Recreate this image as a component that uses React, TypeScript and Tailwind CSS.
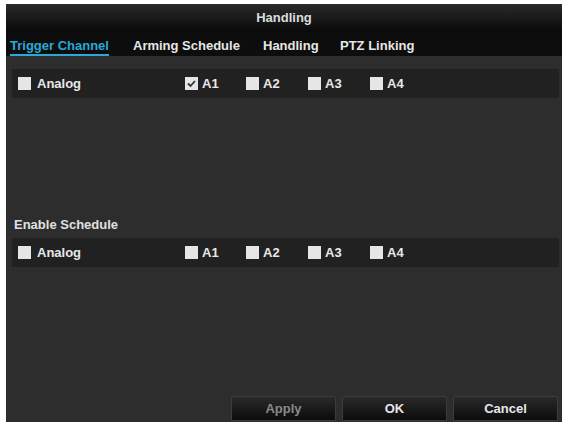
import React from "react";

function Box({ checked }: { checked?: boolean }) {
  return (
    <span className="inline-flex h-[13px] w-[13px] items-center justify-center bg-[#e6e6e6]">
      {checked && (
        <svg width="11" height="11" viewBox="0 0 11 11">
          <path d="M2 5.5 L4.5 8 L9 3" stroke="#333" strokeWidth="1.8" fill="none" />
        </svg>
      )}
    </span>
  );
}

function Row({ a1 }: { a1?: boolean }) {
  const items = [
    { l: "A1", c: a1, w: "w-[61px]" },
    { l: "A2", c: false, w: "w-[62px]" },
    { l: "A3", c: false, w: "w-[62px]" },
    { l: "A4", c: false, w: "w-[62px]" },
  ];
  return (
    <div className="flex h-[29px] items-center bg-[#212121] pl-[6px] text-[13px] font-bold text-[#e8e8e8]">
      <div className="flex w-[167px] items-center gap-[6px]">
        <Box />
        <span>Analog</span>
      </div>
      {items.map((it) => (
        <div key={it.l} className={`flex ${it.w} items-center gap-[4px]`}>
          <Box checked={it.c} />
          <span>{it.l}</span>
        </div>
      ))}
    </div>
  );
}

function Btn({ label, dim }: { label: string; dim?: boolean }) {
  return (
    <div
      className={`flex h-[25px] w-[105px] items-center justify-center rounded-t-[2px] border border-[#3c3c3c] bg-gradient-to-b from-[#2a2a2a] to-[#0c0c0c] text-[13px] font-bold ${
        dim ? "text-[#8a8a8a]" : "text-[#e6e6e6]"
      }`}
    >
      {label}
    </div>
  );
}

export default function App() {
  return (
    <div
      className="h-[426px] w-[568px] bg-white pl-[6px] pt-[4px]"
      style={{ fontFamily: '"Liberation Sans", Arial, sans-serif' }}
    >
      <div className="flex h-[418px] w-[556px] flex-col bg-[#2d2d2d]">
        <div className="flex h-[28px] items-center justify-center bg-gradient-to-b from-[#2a2a2a] to-[#0a0a0a] text-[13px] font-bold text-[#dcdcdc]">
          Handling
        </div>
        <div className="flex h-[24px] items-start bg-[#0d0d0d] pl-[4px] pt-[4px] text-[13px] font-bold text-[#e6e6e6]">
          <div className="w-[123px]">
            <span className="border-b-2 border-[#2aa8d8] pb-[1px] text-[#2aa8d8]">Trigger Channel</span>
          </div>
          <div className="w-[130px]">Arming Schedule</div>
          <div className="w-[77px]">Handling</div>
          <div>PTZ Linking</div>
        </div>
        <div className="flex flex-1 flex-col pl-[6px] pr-[3px] pt-[13px]">
          <Row a1 />
          <div className="h-[114px]" />
          <div className="flex h-[26px] items-center pl-[2px] text-[13px] font-bold text-[#e0e0e0]">Enable Schedule</div>
          <Row />
          <div className="flex-1" />
          <div className="flex justify-end gap-[6px] pb-[1px] pr-[1px]">
            <Btn label="Apply" dim />
            <Btn label="OK" />
            <Btn label="Cancel" />
          </div>
        </div>
      </div>
    </div>
  );
}
